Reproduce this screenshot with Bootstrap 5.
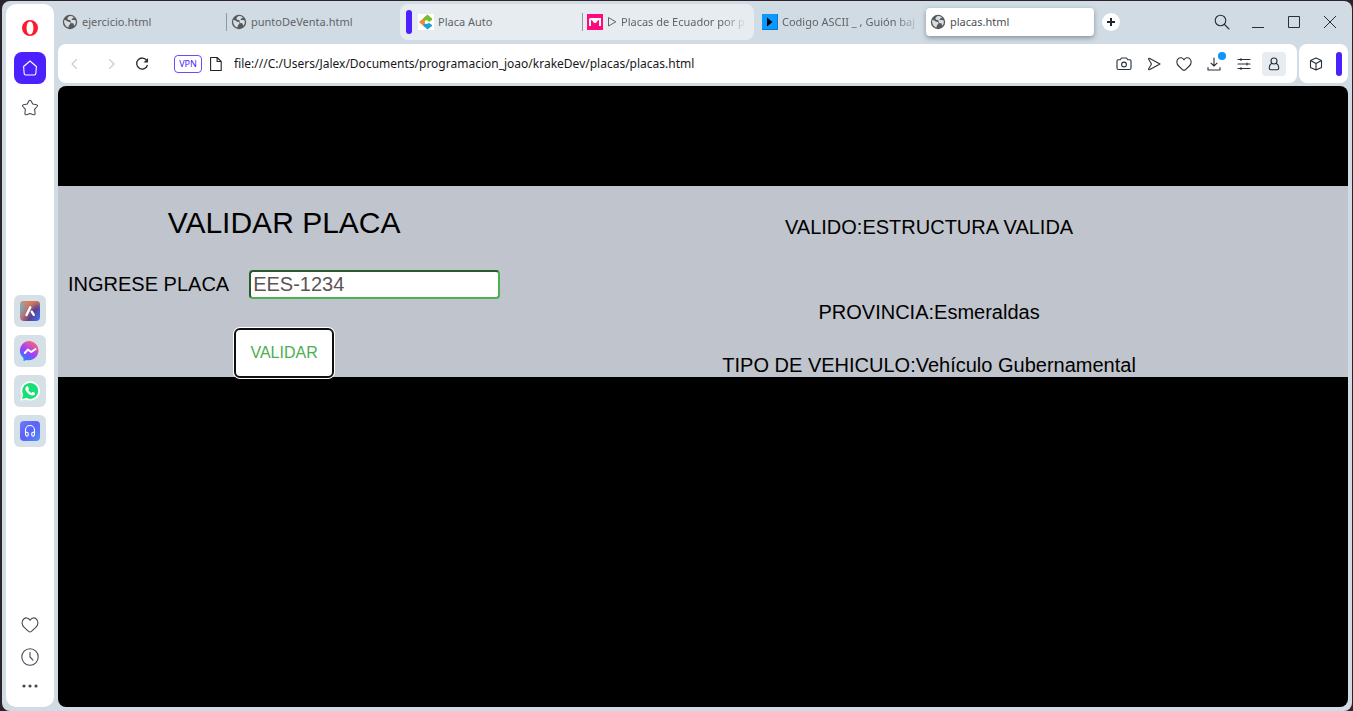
<!DOCTYPE html>
<html lang="es">
<head>
<meta charset="utf-8">
<meta name="viewport" content="width=device-width, initial-scale=1">
<title>placas.html</title>
<link href="https://cdn.jsdelivr.net/npm/bootstrap@5.3.0/dist/css/bootstrap.min.css" rel="stylesheet">
<style>
  :root { --frame: #d1dbe3; --accent: #4b21ff; --ink: #27303a; }
  body { background: #2a2428; font-family: "Noto Sans", "Open Sans", sans-serif; padding: 1px 1px 0 2px; }
  button { background: none; border: 0; padding: 0; color: var(--ink); }
  a { color: inherit; text-decoration: none; }
  svg { display: block; flex: none; }
  .stroke { fill: none; stroke: currentColor; stroke-width: 1.1; stroke-linecap: round; stroke-linejoin: round; }
  .browser { background: var(--frame); border-radius: 8px; padding: 3px 4px 4px; gap: 4px; }
  .sidebar { width: 48px; background: #fff; border-radius: 10px; color: #414b55; padding: 12px 8px 16px; }
  .side-item { width: 32px; height: 32px; border-radius: 8px; display: flex; align-items: center; justify-content: center; color: #414b55; }
  .side-home { background: var(--accent); color: #fff; margin-top: 12px; }
  .side-app { background: #d6e0e7; border-radius: 6px; }
  .side-apps { gap: 8px; padding-top: 171px; }
  .tabstrip { height: 36px; }
  .tab-link { width: 168px; height: 28px; padding: 0 4px; gap: 4px; color: #5f6468; font-size: 11px; line-height: 16px; flex: 0 1 auto; min-width: 0; }
  .tab-link span { flex: 1; min-width: 0; overflow: hidden; white-space: nowrap; }
  .tab-fade { -webkit-mask-image: linear-gradient(90deg, #000 80%, transparent); mask-image: linear-gradient(90deg, #000 80%, transparent); }
  .tab-current { background: #fff; border-radius: 4px; box-shadow: 0 2px 5px rgba(60, 75, 90, .5); color: #4c4f52; }
  .tab-rule { width: 1px; height: 18px; background: #92999e; flex: none; }
  .tab-island { background: #e7ecf0; border-radius: 8px; height: 36px; margin-left: 5px; padding: 0 3px 0 6px; min-width: 0; }
  .tab-island .island-mark { margin-right: 2px; }
  .island-mark { width: 6px; height: 24px; border-radius: 3px; background: var(--accent); flex: none; }
  .new-tab { width: 18px; height: 18px; border-radius: 9px; background: #fff; margin-left: 8px; flex: none; }
  .win-tools { gap: 20px; padding-right: 10px; }
  .toolbars { gap: 2px; }
  .toolbar { background: #fff; border-radius: 8px; height: 39px; }
  .toolbar-end { gap: 12px; padding: 0 6px 0 9px; }
  .address { border: 0; outline: 0; padding: 0; font-size: 12px; line-height: 18px; color: #16191c; background: none; min-width: 0; }
  .vpn { border: 1px solid #6a4cff; border-radius: 4px; width: 28px; height: 18px; color: #4b21ff; font-size: 9px; line-height: 16px; }
  .tools { gap: 14px; padding-right: 11px; }
  .person { width: 24px; height: 24px; border-radius: 4px; background: #e7ecf0; margin-left: -4px; }
  .dot { position: absolute; top: -4px; right: -4px; width: 8px; height: 8px; border-radius: 4px; background: #0a95ff; }
  .viewport { background: #000; border-radius: 8px; overflow: hidden; padding-top: 100px; margin-top: 3px; font-family: "Liberation Sans", Arial, sans-serif; color: #000; }
  .band { background: #c0c4cc; font-size: 20px; line-height: 23px; }
  .form-side { padding: 20px 10px 0; }
  .form-side h1 { font-size: 30px; line-height: 34px; font-weight: 400; margin: 0 0 30px; }
  .plate-row { gap: 20px; margin-bottom: 29px; }
  .plate-input { width: 251px; height: 29px; border: 2px inset #4caf50; border-radius: 4px; padding: 1px 2px; font-size: 20px; line-height: 23px; color: #5c5456; background: #fff; }
  .check-btn { width: 100px; height: 50px; background: #fff; border: 2px solid #101010; border-radius: 6px; box-shadow: 0 0 0 1px #fff; color: #4caf50; font-size: 16px; line-height: 18px; margin-bottom: -1px; }
  .result-side { padding-top: 30px; }
  .result-side p { margin: 0 0 30px; }
  .result-side p:first-child { margin-bottom: 62px; }
  .result-side p:last-child { margin-bottom: 0; }
</style>
</head>
<body class="vh-100 overflow-hidden">
<svg width="0" height="0" class="position-absolute" aria-hidden="true">
  <symbol id="globe" viewBox="0 0 16 16"><circle cx="8" cy="8" r="7.2" fill="#57595b"/><path d="M2.2 6.2c1.800-.4 2.200.8 3.500 1.200 1.400.4 2.900.3 2.800 1.900-.1 1.300-1.500 1.300-1.700 2.500-.2.900.1 1.500-.6 1.600C3.700 12.500 1.700 9.500 2.200 6.200zM7.300 2.200c1.600-.3 3.300.1 4.600 1.200-.3 1-1.600.7-2.200 1.500-.5.800.6 1.200 1.500 1.200 1.100.1 1.700-.2 2.600.8.200 2-.3 3.600-1.500 4.800-.7-.5-.2-1.600-.9-2.300-.7-.6-2.100 0-2.600-1-.5-1.100.2-1.500-.5-2.100-.7-.5-2.300-.1-2.700-1.100-.4-1.200.7-2.600 1.700-3z" fill="#d6dde3"/></symbol>
</svg>
<div class="browser d-flex h-100">
  <nav class="sidebar d-flex flex-column align-items-center flex-shrink-0" aria-label="Barra lateral">
    <button aria-label="Opera"><svg width="16" height="24" viewBox="0 0 16 24"><path fill="#fa1e2d" fill-rule="evenodd" d="M8 4a8 8 0 1 0 0 16A8 8 0 0 0 8 4zm0 1.600c2.200 0 3.400 2.900 3.400 6.400S10.200 18.400 8 18.400 4.600 15.500 4.600 12 5.800 5.600 8 5.600z"/></svg></button>
    <button class="side-item side-home mb-2" aria-label="Inicio"><svg class="stroke" width="16" height="16" viewBox="0 0 16 16"><path d="M1.600 6.500 8 1l6.400 5.500-.6 7.200q-.1 1.300-1.400 1.300H3.600q-1.300 0-1.400-1.300z"/></svg></button>
    <button class="side-item" aria-label="Marcadores"><svg class="stroke" width="18" height="18" viewBox="0 0 18 18"><path d="M8 1.800q1-1.200 2 0l1.700 3.200 3.800.7q1.700.5.600 1.800l-2.500 2.800.5 4.200q-.1 1.700-1.700 1.200L9 14.400l-3.400 1.300q-1.600.5-1.700-1.200l.5-4.200L1.900 7.500q-1.100-1.300.6-1.800L6.300 5z"/></svg></button>
    <div class="side-apps d-flex flex-column">
      <button class="side-item side-app" aria-label="Aria"><svg width="20" height="20" viewBox="0 0 20 20"><defs><linearGradient id="aria" x1="0" y1=".2" x2="1" y2=".8"><stop stop-color="#5cc6dd"/><stop offset=".35" stop-color="#b97370"/><stop offset=".65" stop-color="#5a408f"/><stop offset="1" stop-color="#4169e6"/></linearGradient><linearGradient id="ariaTop" x2="0" y2="1"><stop stop-color="#e67d4e" stop-opacity=".8"/><stop offset=".4" stop-color="#e67d4e" stop-opacity="0"/></linearGradient></defs><rect width="20" height="20" rx="4" fill="url(#aria)"/><rect width="20" height="20" rx="4" fill="url(#ariaTop)"/><path d="M6.500 14 10.300 6.300M11.700 10.700l2.100 3.100" stroke="#fff" stroke-width="2.400" stroke-linecap="round"/></svg></button>
      <button class="side-item side-app" aria-label="Messenger"><svg width="20" height="20" viewBox="0 0 20 20"><defs><linearGradient id="msg" x1=".2" y1="1" x2=".8" y2="0"><stop stop-color="#0a91ff"/><stop offset=".45" stop-color="#a03cff"/><stop offset="1" stop-color="#ff6b68"/></linearGradient></defs><path d="M10 0a9.600 9.600 0 1 1-3.200 18.900L3.600 20 3.400 16.900A9.600 9.600 0 0 1 10 0z" fill="url(#msg)"/><path d="m4.800 12 3-3.400 3.500 2.400 4.200-3" fill="none" stroke="#fff" stroke-width="2" stroke-linejoin="round" stroke-linecap="round"/></svg></button>
      <button class="side-item side-app" aria-label="WhatsApp"><svg width="20" height="20" viewBox="0 0 20 20"><path d="M10.200.2a9.700 9.700 0 1 1-4.600 18.200L.3 19.800l1.500-5A9.700 9.700 0 0 1 10.200.2z" fill="#fff"/><circle cx="10.200" cy="9.900" r="8" fill="#16df75"/><path d="m2 18 1.400-5 3.200 3.800z" fill="#16df75"/><path d="M6.300 5.700q1.400-1.300 2 .2l.7 1.600q.1.600-.8 1.500 1.300 2.200 3.300 2.900l1.200-1.100 2.300 1.100q.5 2.400-2.300 2.600-3.600 0-6.200-3.700-2.200-3.100-.2-5.100z" fill="#fff"/></svg></button>
      <button class="side-item side-app" aria-label="Reproductor"><svg width="20" height="20" viewBox="0 0 20 20"><defs><linearGradient id="play" x2="1" y2="1"><stop stop-color="#6a7dfa"/><stop offset=".5" stop-color="#5b60fa"/><stop offset="1" stop-color="#5291fa"/></linearGradient></defs><rect width="20" height="20" rx="4" fill="url(#play)"/><path d="M5.500 12V9a4.500 4.500 0 0 1 9 0v3M5.500 11.400q3-.7 2.800 2-.2 2-1.600 1.700-1.300-.4-1.200-3.700zm9 0q-3-.7-2.800 2 .2 2 1.600 1.700 1.300-.4 1.200-3.700z" fill="none" stroke="#fff" stroke-width="1.100"/></svg></button>
    </div>
    <div class="d-flex flex-column align-items-center mt-auto">
      <button class="side-item" aria-label="Favoritos"><svg class="stroke" width="18" height="18" viewBox="0 0 18 18"><path d="M9 4.300C7.300 1.400 4.500 1.500 3 2.700 0 5 .7 9 3.200 11.300l4.400 4.100q1.400 1.100 2.800 0l4.400-4.100C17.300 9 18 5 15 2.700 13.500 1.500 10.700 1.400 9 4.300z"/></svg></button>
      <button class="side-item" aria-label="Historial"><svg class="stroke" width="18" height="18" viewBox="0 0 18 18"><circle cx="9" cy="9" r="8.200"/><path d="M9 4.500V9l3 3.200"/></svg></button>
      <button class="side-item h-auto pt-2" aria-label="Más"><svg width="16" height="10" viewBox="0 0 16 10" fill="currentColor"><circle cx="2" cy="5" r="1.600"/><circle cx="8" cy="5" r="1.600"/><circle cx="14" cy="5" r="1.600"/></svg></button>
    </div>
  </nav>

  <div class="d-flex flex-column flex-grow-1 overflow-hidden">
    <header>
      <div class="tabstrip d-flex align-items-center mb-1">
        <a href="#" class="tab-link d-flex align-items-center"><svg width="16" height="16"><use href="#globe"/></svg><span>ejercicio.html</span></a>
        <i class="tab-rule"></i>
        <a href="#" class="tab-link d-flex align-items-center"><svg width="16" height="16"><use href="#globe"/></svg><span>puntoDeVenta.html</span></a>
        <div class="tab-island d-flex align-items-center">
          <i class="island-mark"></i>
          <a href="#" class="tab-link d-flex align-items-center"><svg width="16" height="16" viewBox="0 0 16 16"><path fill="#fff" d="M0 0h16v16H0z"/><path d="M1 8 6 4l1 4-1 4.500z" fill="#f5862a"/><path d="M5 4.500 9.500.5 14 4.500V6L11 8 9 6 6.500 7z" fill="#76bd2c"/><path d="M6 9.500 8.500 10 11 9l3 2v1l-4.500 3.500L5.500 12z" fill="#1da1dc"/></svg><span>Placa Auto</span></a>
          <i class="tab-rule"></i>
          <a href="#" class="tab-link d-flex align-items-center"><svg width="16" height="16" viewBox="0 0 16 16"><path fill="#ff0a7c" d="M0 0h16v16H0z"/><path d="M2 12V5.500Q2 4 3.500 4H14v8h-2V6q-1.500 0-2 1.500L9 9H7L6 7.500Q5.500 6 4 6v6z" fill="#fff"/></svg><svg class="stroke" width="10" height="10" viewBox="0 0 10 10"><path stroke-width="1" d="M1.500 1v8l7-4z"/></svg><span class="tab-fade">Placas de Ecuador por p</span></a>
        </div>
        <a href="#" class="tab-link d-flex align-items-center ms-1"><svg width="16" height="16" viewBox="0 0 16 16"><path fill="#0b98ff" d="M0 0h16v16H0z"/><path fill="#0878d4" d="M15 0h1v16H0v-1h15z"/><path d="M5 3.500v9L10.500 8z" fill="#000"/></svg><span class="tab-fade">Codigo ASCII _ , Guión baj</span></a>
        <a href="#" class="tab-link tab-current d-flex align-items-center" aria-current="page"><svg width="16" height="16"><use href="#globe"/></svg><span>placas.html</span></a>
        <button class="new-tab d-flex align-items-center justify-content-center" aria-label="Nueva pestaña"><svg width="8" height="8" viewBox="0 0 8 8"><path d="M4 0v8M0 4h8" stroke="#20282f" stroke-width="2"/></svg></button>
        <div class="win-tools d-flex align-items-center ms-auto">
          <button aria-label="Buscar"><svg class="stroke" width="16" height="16" viewBox="0 0 16 16"><circle cx="6.500" cy="6.500" r="5.300"/><path d="m10.500 10.500 4.500 4.500"/></svg></button>
          <button aria-label="Minimizar"><svg width="16" height="16" viewBox="0 0 16 16"><path d="M2 13.500h12" stroke="currentColor"/></svg></button>
          <button aria-label="Maximizar"><svg width="16" height="16" viewBox="0 0 16 16"><path d="M2.500 2.500h11v11h-11z" fill="none" stroke="currentColor"/></svg></button>
          <button aria-label="Cerrar"><svg width="16" height="16" viewBox="0 0 16 16"><path d="m2 2 12 12M14 2 2 14" stroke="currentColor"/></svg></button>
        </div>
      </div>
      <div class="toolbars d-flex">
        <div class="toolbar d-flex align-items-center flex-grow-1 ps-2">
          <button class="me-4 opacity-25" aria-label="Atrás"><svg class="stroke" width="16" height="16" viewBox="0 0 16 16"><path d="M10.500 3.500 6 8l4.500 4.500"/></svg></button>
          <button class="opacity-25" aria-label="Adelante"><svg class="stroke" width="16" height="16" viewBox="0 0 16 16"><path d="M3.500 3.500 8 8l-4.500 4.500"/></svg></button>
          <button class="ms-2 ps-1" aria-label="Recargar"><svg width="16" height="16" viewBox="0 0 16 16"><path d="M12.800 4.500A5.500 5.500 0 1 0 13.500 9" fill="none" stroke="currentColor" stroke-width="1.300"/><path d="M14 2v4.500H9.500z" fill="currentColor"/></svg></button>
          <button class="vpn ms-4" aria-label="VPN">VPN</button>
          <svg class="stroke mx-2" width="12" height="16" viewBox="0 0 12 16"><path d="M.6 1.500h6.500L11.200 5.500v9H.6zM7.100 1.500v4h4"/></svg>
          <input class="address flex-grow-1 ms-1" aria-label="Dirección" value="file:///C:/Users/Jalex/Documents/programacion_joao/krakeDev/placas/placas.html">
          <div class="tools d-flex align-items-center">
            <button aria-label="Captura"><svg class="stroke" width="16" height="16" viewBox="0 0 16 16"><path d="M1 5q0-1.200 1.200-1.200h2L5.500 2h5l1.300 1.800h2Q15 3.800 15 5v7q0 1.500-1.500 1.500h-11Q1 13.500 1 12z"/><circle cx="8" cy="8.500" r="2.400"/></svg></button>
            <button aria-label="Enviar"><svg class="stroke" width="16" height="16" viewBox="0 0 16 16"><path d="M2.500 3q.2-1 1.300-.6L14 8 3.800 13.600q-1.100.4-1.300-.6L5.500 8z"/></svg></button>
            <button aria-label="Me gusta"><svg class="stroke" width="16" height="16" viewBox="0 0 16 16"><path d="M8 3.800C6.500 1.300 4 1.300 2.600 2.400 0 4.400.5 8 2.700 10l4 3.800q1.300.9 2.600 0l4-3.800C15.500 8 16 4.400 13.400 2.400 12 1.300 9.500 1.300 8 3.800z"/></svg></button>
            <button class="position-relative" aria-label="Descargas"><svg class="stroke" width="16" height="16" viewBox="0 0 16 16"><path d="M8 2v8M5 7.200 8 10l3-2.800M2 11.500V14h12v-2.500"/></svg><i class="dot"></i></button>
            <button aria-label="Configuración rápida"><svg class="stroke" width="16" height="16" viewBox="0 0 16 16"><path d="M2 3.500h12M2 8h12M2 12.500h12M5 2.500v2M11 7v2M5 11.500v2"/></svg></button>
            <button class="person d-flex align-items-center justify-content-center" aria-label="Perfil"><svg class="stroke" width="16" height="16" viewBox="0 0 16 16"><circle cx="8" cy="5" r="3"/><path d="M5.700 7.300Q3.200 9 3.200 12q0 1.700 1.600 1.700h6.400q1.600 0 1.600-1.700 0-3-2.500-4.700"/></svg></button>
          </div>
        </div>
        <div class="toolbar toolbar-end d-flex align-items-center">
          <button aria-label="Extensiones"><svg class="stroke" width="16" height="16" viewBox="0 0 16 16"><path d="M8 2 13.500 4.500v7L8 14 2.500 11.500v-7zM2.500 4.500 8 7.500l5.500-3M8 7.500V14"/></svg></button>
          <i class="island-mark"></i>
        </div>
      </div>
    </header>

    <main class="viewport flex-grow-1">
      <div class="band d-flex align-items-stretch">
        <form class="form-side text-center" onsubmit="return false">
          <h1>VALIDAR PLACA</h1>
          <div class="plate-row d-flex align-items-center">
            <label for="placa" class="text-nowrap">INGRESE PLACA</label>
            <input id="placa" class="plate-input" type="text" value="EES-1234">
          </div>
          <button class="check-btn" type="submit">VALIDAR</button>
        </form>
        <section class="result-side flex-grow-1 text-center">
          <p>VALIDO:ESTRUCTURA VALIDA</p>
          <p>PROVINCIA:Esmeraldas</p>
          <p>TIPO DE VEHICULO:Vehículo Gubernamental</p>
        </section>
      </div>
    </main>
  </div>
</div>
<script src="https://cdn.jsdelivr.net/npm/bootstrap@5.3.0/dist/js/bootstrap.bundle.min.js"></script>
</body>
</html>
